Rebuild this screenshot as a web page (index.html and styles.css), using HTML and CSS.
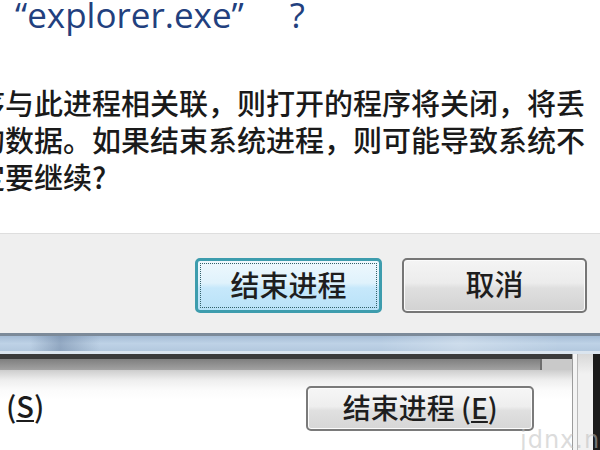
FILE: index.html
```html
<!DOCTYPE html>
<html lang="zh-CN">
<head>
<meta charset="utf-8">
<title>结束进程</title>
<link rel="stylesheet" href="styles.css">
</head>
<body>
<div class="screen">
  <div class="dialog">
    <div class="dialog-body">
      <div class="title">“explorer.exe”<span class="qmark">?</span></div>
      <div class="message">
        <div class="line">序与此进程相关联，则打开的程序将关闭，将丢</div>
        <div class="line">的数据。如果结束系统进程，则可能导致系统不</div>
        <div class="line">定要继续?</div>
      </div>
    </div>
    <div class="dialog-footer">
      <button class="btn btn-primary"><span class="focus">结束进程</span></button>
      <button class="btn btn-cancel">取消</button>
    </div>
  </div>
  <div class="glass"></div>
  <div class="lower">
    <div class="lower-main">
      <div class="dark-line"></div>
      <div class="strip"><div class="strip-panel"></div><div class="strip-rest"></div></div>
      <div class="content">
        <span class="shortcut">(<u>S</u>)</span>
        <button class="btn btn-end">结束进程 (<u>E</u>)</button>
      </div>
    </div>
    <div class="lower-side">
      <div class="side-a"></div>
      <div class="side-b"></div>
      <div class="side-c"></div>
    </div>
  </div>
  <div class="watermark">jdnx.net</div>
</div>
</body>
</html>
```
FILE: styles.css
```css
html, body {
  margin: 0;
  padding: 0;
}
body {
  width: 600px;
  height: 450px;
  overflow: hidden;
  background: #ffffff;
  font-family: "Noto Sans CJK SC", "Noto Sans", sans-serif;
}
.screen {
  position: relative;
  width: 600px;
  height: 450px;
  display: flex;
  flex-direction: column;
  overflow: hidden;
}
.dialog {
  display: flex;
  flex-direction: column;
}
.dialog-body {
  height: 233px;
  background: #ffffff;
  overflow: hidden;
}
.title {
  margin: -5px 0 0 15px;
  font-family: "Open Sans", "Noto Sans CJK SC", sans-serif;
  font-size: 35px;
  line-height: 40px;
  color: #22407e;
  white-space: nowrap;
}
.qmark {
  margin-left: 46px;
}
.message {
  margin-top: 49px;
  margin-left: -24px;
  font-size: 29px;
  line-height: 37px;
  font-weight: 500;
  color: #1a1a1a;
  white-space: nowrap;
}
.dialog-footer {
  height: 100px;
  box-sizing: border-box;
  border-top: 1px solid #dedede;
  background: #efefef;
  display: flex;
  justify-content: flex-end;
  align-items: flex-start;
  gap: 20px;
  padding: 24px 13px 0 0;
}
.btn {
  font-family: "Noto Sans CJK SC", sans-serif;
  font-size: 29px;
  font-weight: 500;
  color: #1e1e1e;
  padding: 0;
  margin: 0;
  cursor: default;
}
.btn-primary {
  width: 187px;
  height: 55px;
  border: 3px solid #3d9cad;
  border-radius: 5px;
  background: linear-gradient(to bottom, #eef8fd 0%, #dff2fc 45%, #c6e8fb 55%, #b9e2f8 100%);
  padding: 2px;
  display: flex;
}
.focus {
  flex: 1;
  border: 1px dotted #33616a;
  display: flex;
  align-items: center;
  justify-content: center;
  line-height: 1;
  padding-bottom: 2px;
}
.btn-cancel {
  width: 185px;
  height: 55px;
  border: 2px solid #767676;
  border-radius: 5px;
  box-shadow: inset 0 0 0 1px #fbfbfb;
  background: linear-gradient(to bottom, #f4f4f4 0%, #ececec 45%, #dfdfdf 55%, #d2d2d2 100%);
  line-height: 1;
  padding-bottom: 4px;
}
.glass {
  height: 15px;
  border-top: 3px solid #7c8a99;
  border-bottom: 3px solid #dbe5ef;
  background:
    linear-gradient(to right, rgba(255,255,255,0) 30px, rgba(70,95,130,0.35) 60px, rgba(255,255,255,0) 100px),
    linear-gradient(to right, rgba(255,255,255,0) 380px, rgba(255,255,255,0.25) 460px, rgba(255,255,255,0) 560px),
    linear-gradient(to bottom, #a6bdd6 0%, #bed2e6 50%, #b3c8de 100%);
}
.lower {
  flex: 1;
  display: flex;
}
.lower-main {
  flex: 1;
  display: flex;
  flex-direction: column;
}
.dark-line {
  height: 5px;
  background: #3b3b3b;
}
.strip {
  height: 11px;
  display: flex;
}
.strip-panel {
  width: 540px;
  border-right: 2px solid #6f6f6f;
  background: linear-gradient(to bottom, #7f7f7f, #a2a2a2);
}
.strip-rest {
  flex: 1;
  background: #c9c9c9;
}
.content {
  flex: 1;
  position: relative;
  background: linear-gradient(to bottom, #cdcdcd 0px, #eeeeee 10px, #fbfbfb 20px, #ffffff 30px);
  display: flex;
  align-items: flex-start;
  padding-top: 16px;
  box-sizing: border-box;
}
.shortcut {
  margin: 2px 0 0 6px;
  font-size: 29px;
  line-height: 34px;
  font-weight: 500;
  color: #1c1c1c;
}
.btn-end {
  margin-left: 262px;
  width: 228px;
  height: 45px;
  border: 2px solid #7a7a7a;
  border-radius: 5px;
  box-shadow: inset 0 0 0 1px #fcfcfc;
  background: linear-gradient(to bottom, #f6f6f6 0%, #eeeeee 45%, #e0e0e0 55%, #d6d6d6 100%);
  font-size: 28px;
  line-height: 1;
  padding-bottom: 3px;
}
.lower-side {
  width: 28px;
  display: flex;
}
.side-a {
  width: 4px;
  border-left: 1px solid #9c9c9c;
  border-right: 1px solid #b9b9b9;
  background: #f4f4f4;
}
.side-b {
  flex: 1;
  background: linear-gradient(to bottom, #d8d8d8 0, #f1f1f1 20px);
}
.side-c {
  width: 7px;
  background: #1b1b1b;
}
.watermark {
  position: absolute;
  left: 520px;
  top: 426px;
  font-family: "DejaVu Sans", sans-serif;
  font-size: 24px;
  letter-spacing: 1px;
  color: rgba(190, 190, 190, 0.55);
  white-space: nowrap;
}
```
